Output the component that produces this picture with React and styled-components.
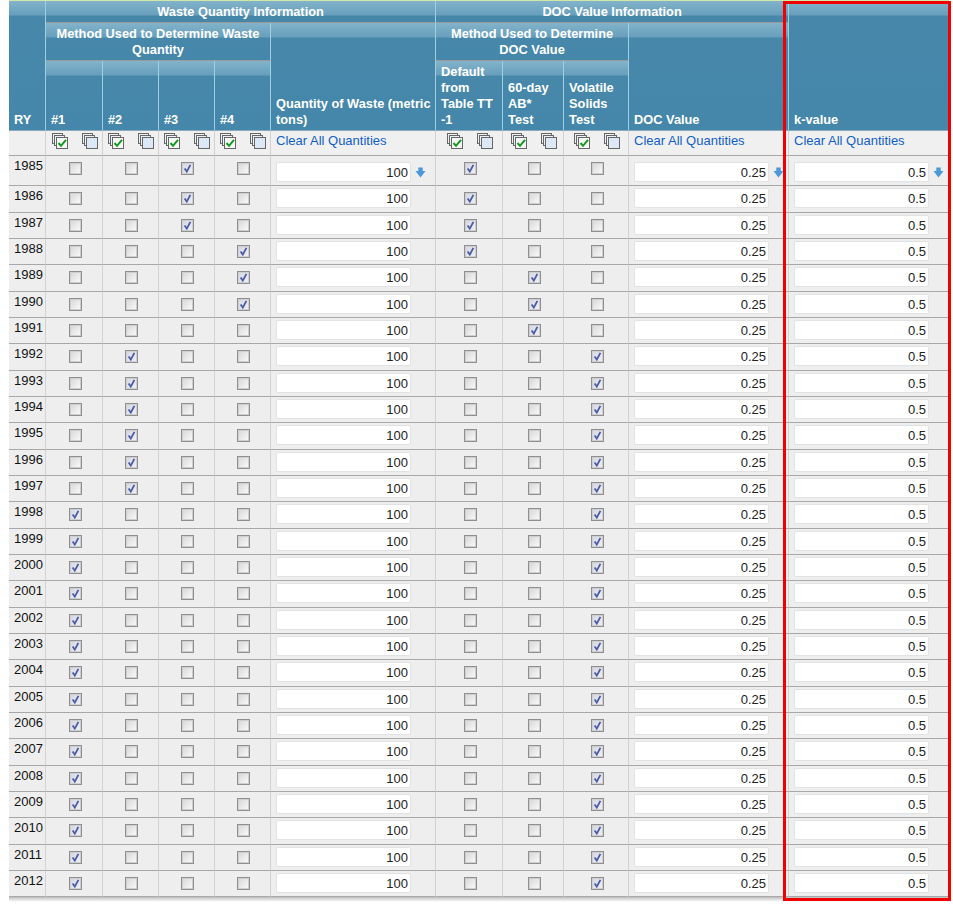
import React from "react";
import styled, { createGlobalStyle } from "styled-components";

const Global = createGlobalStyle`
  html, body { margin: 0; padding: 0; background: #fff; }
  body { font-family: "Liberation Sans", Arial, sans-serif; font-size: 12px; color: #111; }
`;

const Page = styled.div`
  position: relative;
  width: 953px;
  height: 909px;
  overflow: hidden;
`;
const TopLine = styled.div`
  height: 1px;
  margin-left: 9px;
  width: 940px;
  background: #cfe8a8;
`;
const Sheet = styled.div`
  margin-left: 9px;
  width: 940px;
`;
const Table = styled.table`
  table-layout: fixed;
  width: 940px;
  border-collapse: separate;
  border-spacing: 0;
`;
const HeadRow = styled.tr`
  height: ${(p) => p.$h}px;
`;
const Th = styled.th`
  box-sizing: border-box;
  padding: ${(p) => (p.$center ? "3px 4px 2px" : `0 ${p.$tight ? 14 : 0}px 2px 5px`)};
  color: #fff;
  font: bold 12.8px/16px "Liberation Sans", Arial, sans-serif;
  text-align: ${(p) => (p.$center ? "center" : "left")};
  vertical-align: ${(p) => (p.$center ? "top" : "bottom")};
  background: linear-gradient(#82b3ca 0, #689fbc 14px, #4687aa 15px, #4587aa 100%);
  border-right: 1px solid ${(p) => (p.$last ? "#4587aa" : "#9dd0e2")};
  border-bottom: 1px solid ${(p) => (p.$line ? "#9a9a9a" : "#8ba9b8")};
`;
const Tr = styled.tr`
  height: ${(p) => p.$h}px;
`;
const Td = styled.td`
  box-sizing: border-box;
  padding: 0;
  vertical-align: top;
  background: #eeeeee;
  border-right: 1px solid #d2d2d2;
  border-bottom: 1px solid #a8a8a8;
  &:last-child { border-right: none; }
`;
const ToolCell = styled(Td)`
  background: #f0f0f0;
`;
const Year = styled.div`
  padding: 2px 0 0 5px;
  font-size: 13px;
  line-height: 16px;
  color: #111;
`;
const CheckSlot = styled.div`
  display: flex;
  justify-content: center;
  padding: 6px 0 0 2px;
`;
const Box = styled.span`
  box-sizing: border-box;
  display: block;
  width: 13px;
  height: 13px;
  border: 1px solid #8f8f8f;
  box-shadow: inset 0 0 0 1px #cfcfcf;
  background: ${(p) =>
    p.$on
      ? "linear-gradient(135deg, #d3d6e2, #f0f1f6)"
      : "linear-gradient(135deg, #d6d6d6, #fbfbfb)"};
`;
const Tools = styled.div`
  display: flex;
  justify-content: center;
  gap: 14px;
  padding: 2px 0 0 1px;
`;
const ToolIcon = styled.svg`
  display: block;
  width: 16px;
  height: 16px;
`;
const ClearLink = styled.a`
  display: block;
  padding: 2px 0 0 5px;
  color: #0f5fc6;
  font-size: 13px;
  line-height: 16px;
  white-space: nowrap;
`;
const InputSlot = styled.div`
  display: flex;
  align-items: center;
  padding: ${(p) => (p.$first ? "6px" : "2px")} 0 0 5px;
`;
const Amount = styled.input`
  box-sizing: border-box;
  width: 135px;
  height: 20px;
  padding: 0 2px 0 0;
  border: 1px solid #e2e2e2;
  border-radius: 2px;
  background: #fff;
  color: #222;
  font: 13px "Liberation Sans", Arial, sans-serif;
  text-align: right;
  outline: none;
`;
const FillIcon = styled.svg`
  display: block;
  width: 11px;
  height: 11px;
  margin-left: 4px;
  flex: none;
`;
const Shade = styled.div`
  height: 5px;
  background: linear-gradient(#bdbdbd, #f4f4f4 80%, #fff);
`;
const Highlight = styled.div`
  position: absolute;
  box-sizing: border-box;
  left: 783px;
  top: 1px;
  width: 168px;
  height: 900px;
  border: 3px solid #f00000;
  pointer-events: none;
`;

const Stack = ({ checked }) => (
  <ToolIcon viewBox="0 0 16 16">
    <rect x="0.5" y="0.5" width="10" height="10" fill="#eef2f8" stroke="#666" />
    <rect x="2.5" y="2.5" width="10" height="10" fill="#eef2f8" stroke="#666" />
    <rect
      x="4.5"
      y="4.5"
      width="11"
      height="11"
      fill={checked ? "#f6f8f6" : "#dce8f6"}
      stroke="#666"
    />
    {checked && (
      <path d="M6.5 10 L9 12.8 L14 6.8" fill="none" stroke="#129a1c" strokeWidth="2" />
    )}
  </ToolIcon>
);

const Check = ({ on }) => (
  <Box $on={on}>
    {on && (
      <svg width="11" height="11" viewBox="0 0 11 11" style={{ display: "block" }}>
        <path d="M2.6 5.4 L4.8 8.6 L8.4 1.8" fill="none" stroke="#4a5ca6" strokeWidth="1.8" />
      </svg>
    )}
  </Box>
);

const FillDown = () => (
  <FillIcon viewBox="0 0 11 11">
    <path d="M3.3 0.5 H7.7 V4 H10.5 L5.5 10.5 L0.5 4 H3.3 Z" fill="#4b98d8" />
  </FillIcon>
);

const widths = [37, 57, 56, 56, 56, 165, 67, 61, 65, 160, 160];
const years = Array.from({ length: 28 }, (_, i) => 1985 + i);

const wasteMethod = (y) =>
  y <= 1987 ? 2 : y <= 1990 ? 3 : y === 1991 ? -1 : y <= 1997 ? 1 : 0;
const docMethod = (y) => (y <= 1988 ? 0 : y <= 1991 ? 1 : 2);

const rowBottom = (i) => Math.round(26.33 * i + 0.33);
const rowHeight = (i) => (i === 0 ? 30 : rowBottom(i) - rowBottom(i - 1));

const ToolPair = () => (
  <ToolCell>
    <Tools>
      <Stack checked />
      <Stack />
    </Tools>
  </ToolCell>
);

const ClearCell = () => (
  <ToolCell>
    <ClearLink>Clear All Quantities</ClearLink>
  </ToolCell>
);

const AmountCell = ({ value, first }) => (
  <Td>
    <InputSlot $first={first}>
      <Amount readOnly value={value} />
      {first && <FillDown />}
    </InputSlot>
  </Td>
);

export default function App() {
  return (
    <Page>
      <Global />
      <TopLine />
      <Sheet>
        <Table>
          <colgroup>
            {widths.map((w, i) => (
              <col key={i} width={w} />
            ))}
          </colgroup>
          <thead>
            <HeadRow $h={22}>
              <Th rowSpan={3}>RY</Th>
              <Th colSpan={5} $center $line>Waste Quantity Information</Th>
              <Th colSpan={4} $center $line>DOC Value Information</Th>
              <Th rowSpan={3} $last>k-value</Th>
            </HeadRow>
            <HeadRow $h={38}>
              <Th colSpan={4} $center $line>Method Used to Determine Waste Quantity</Th>
              <Th rowSpan={2}>Quantity of Waste (metric tons)</Th>
              <Th colSpan={3} $center $line>Method Used to Determine DOC Value</Th>
              <Th rowSpan={2}>DOC Value</Th>
            </HeadRow>
            <HeadRow $h={70}>
              <Th>#1</Th>
              <Th>#2</Th>
              <Th>#3</Th>
              <Th>#4</Th>
              <Th>Default from Table TT -1</Th>
              <Th $tight>60-day AB* Test</Th>
              <Th>Volatile Solids Test</Th>
            </HeadRow>
          </thead>
          <tbody>
            <Tr $h={25}>
              <ToolCell />
              <ToolPair />
              <ToolPair />
              <ToolPair />
              <ToolPair />
              <ClearCell />
              <ToolPair />
              <ToolPair />
              <ToolPair />
              <ClearCell />
              <ClearCell />
            </Tr>
            {years.map((y, i) => (
              <Tr key={y} $h={rowHeight(i)}>
                <Td><Year>{y}</Year></Td>
                {[0, 1, 2, 3].map((m) => (
                  <Td key={m}>
                    <CheckSlot><Check on={wasteMethod(y) === m} /></CheckSlot>
                  </Td>
                ))}
                <AmountCell value="100" first={i === 0} />
                {[0, 1, 2].map((m) => (
                  <Td key={m}>
                    <CheckSlot><Check on={docMethod(y) === m} /></CheckSlot>
                  </Td>
                ))}
                <AmountCell value="0.25" first={i === 0} />
                <AmountCell value="0.5" first={i === 0} />
              </Tr>
            ))}
          </tbody>
        </Table>
        <Shade />
      </Sheet>
      <Highlight />
    </Page>
  );
}
